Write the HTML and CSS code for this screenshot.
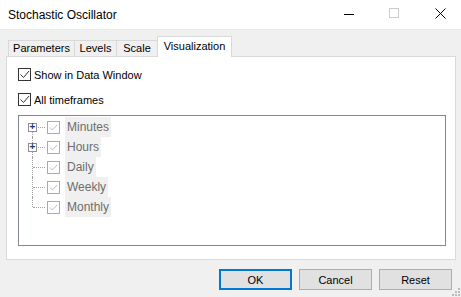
FILE: index.html
```html
<!DOCTYPE html>
<html lang="en">
<head>
  <meta charset="UTF-8" />
  <title>Stochastic Oscillator</title>
  <link rel="stylesheet" href="styles.css">
</head>
<body>
  <div class="window">
    <div class="titlebar">
      <span class="title">Stochastic Oscillator</span>
      <div class="controls">
        <svg class="ctl" width="46" height="29" viewBox="0 0 46 29"><path d="M20 14.5h10" stroke="#000" stroke-width="1"/></svg>
        <svg class="ctl" width="46" height="29" viewBox="0 0 46 29"><rect x="19.5" y="8.5" width="9" height="9" fill="none" stroke="#ccc"/></svg>
        <svg class="ctl" width="46" height="29" viewBox="0 0 46 29"><path d="M19.5 8.5l10 10M29.5 8.5l-10 10" stroke="#000" stroke-width="1"/></svg>
      </div>
    </div>

    <div class="tabs">
      <div class="tab t-params">Parameters</div>
      <div class="tab t-levels">Levels</div>
      <div class="tab t-scale">Scale</div>
      <div class="tab active">Visualization</div>
    </div>

    <div class="panel">
      <label class="check-row">
        <span class="box"><svg width="11" height="11" viewBox="0 0 11 11"><path d="M1.5 5.5l3 3 5.5-6.5" fill="none" stroke="#333" stroke-width="1"/></svg></span>
        Show in Data Window
      </label>
      <label class="check-row second">
        <span class="box"><svg width="11" height="11" viewBox="0 0 11 11"><path d="M1.5 5.5l3 3 5.5-6.5" fill="none" stroke="#333" stroke-width="1"/></svg></span>
        All timeframes
      </label>

      <div class="tree">
        <div class="node first">
          <span class="branch"><span class="plus">+</span></span>
          <span class="tbox"><svg width="11" height="11" viewBox="0 0 11 11"><path d="M2 5.5l2.5 2.5 4.5-5" fill="none" stroke="#9cc2ea" stroke-width="1"/></svg></span>
          <span class="name">Minutes</span>
        </div>
        <div class="node">
          <span class="branch"><span class="plus">+</span></span>
          <span class="tbox"><svg width="11" height="11" viewBox="0 0 11 11"><path d="M2 5.5l2.5 2.5 4.5-5" fill="none" stroke="#9cc2ea" stroke-width="1"/></svg></span>
          <span class="name">Hours</span>
        </div>
        <div class="node">
          <span class="branch"></span>
          <span class="tbox"><svg width="11" height="11" viewBox="0 0 11 11"><path d="M2 5.5l2.5 2.5 4.5-5" fill="none" stroke="#9cc2ea" stroke-width="1"/></svg></span>
          <span class="name">Daily</span>
        </div>
        <div class="node">
          <span class="branch"></span>
          <span class="tbox"><svg width="11" height="11" viewBox="0 0 11 11"><path d="M2 5.5l2.5 2.5 4.5-5" fill="none" stroke="#9cc2ea" stroke-width="1"/></svg></span>
          <span class="name">Weekly</span>
        </div>
        <div class="node last">
          <span class="branch"></span>
          <span class="tbox"><svg width="11" height="11" viewBox="0 0 11 11"><path d="M2 5.5l2.5 2.5 4.5-5" fill="none" stroke="#9cc2ea" stroke-width="1"/></svg></span>
          <span class="name">Monthly</span>
        </div>
      </div>
    </div>

    <div class="buttons">
      <button class="default">OK</button>
      <button>Cancel</button>
      <button>Reset</button>
    </div>

    <svg class="grip" width="10" height="10" viewBox="0 0 10 10">
      <rect x="7" y="1" width="2" height="2" fill="#bcbcbc"/>
      <rect x="4" y="4" width="2" height="2" fill="#bcbcbc"/>
      <rect x="7" y="4" width="2" height="2" fill="#bcbcbc"/>
      <rect x="1" y="7" width="2" height="2" fill="#bcbcbc"/>
      <rect x="4" y="7" width="2" height="2" fill="#bcbcbc"/>
      <rect x="7" y="7" width="2" height="2" fill="#bcbcbc"/>
    </svg>
  </div>
</body>
</html>
```

FILE: styles.css
```css
* { margin: 0; padding: 0; box-sizing: border-box; }
body {
  background: #f0f0f0;
  font-family: 'Liberation Sans', Arial, sans-serif;
  font-size: 11px;
  color: #000;
  overflow: hidden;
}
.window {
  width: 461px;
  height: 297px;
  position: relative;
  display: flex;
  flex-direction: column;
}
.titlebar {
  height: 30px;
  background: #fff;
  border-bottom: 1px solid #ececec;
  display: flex;
  align-items: flex-start;
  justify-content: space-between;
}
.title {
  font-size: 12px;
  margin: 8px 0 0 8px;
}
.controls { display: flex; margin-right: -1px; }
.ctl { display: block; }

.tabs {
  display: flex;
  align-items: flex-end;
  margin: 6px 0 0 8px;
  height: 20px;
  position: relative;
  z-index: 1;
}
.tab {
  height: 16px;
  line-height: 15px;
  text-align: center;
  border: 1px solid #d9d9d9;
  border-bottom: none;
  border-right: none;
  background: #f0f0f0;
}
.t-params { width: 66px; }
.t-levels { width: 42px; }
.t-scale { width: 41px; }
.tab.active {
  width: 75px;
  height: 21px;
  margin-bottom: -1px;
  background: #fff;
  border-right: 1px solid #d9d9d9;
  line-height: 18px;
}
.panel {
  margin: 0 5px 0 6px;
  height: 204px;
  background: #fff;
  border: 1px solid #d9d9d9;
  padding: 11px 9px 0 11px;
}
.check-row {
  display: flex;
  align-items: center;
  gap: 3px;
  height: 13px;
}
.check-row.second { margin-top: 12px; }
.box {
  width: 13px;
  height: 13px;
  border: 1px solid #333;
  background: #fff;
  display: flex;
  align-items: center;
  justify-content: center;
}
.box svg { display: block; }

.tree {
  margin-top: 9px;
  height: 131px;
  border: 1px solid #828790;
  padding: 1px 0 0 9px;
}
.node {
  height: 20px;
  display: flex;
  align-items: center;
}
.branch {
  width: 19px;
  height: 20px;
  position: relative;
  flex: none;
}
.branch::before {
  content: '';
  position: absolute;
  left: 4px;
  top: 0;
  height: 20px;
  border-left: 1px dotted #a0a0a0;
}
.node.first .branch::before { top: 15px; height: 5px; }
.node.last .branch::before { height: 10px; }
.branch::after {
  content: '';
  position: absolute;
  left: 5px;
  top: 10px;
  width: 12px;
  border-top: 1px dotted #a0a0a0;
}
.plus {
  position: absolute;
  left: 0;
  top: 6px;
  width: 9px;
  height: 9px;
  border: 1px solid #919191;
  background: #fff;
  z-index: 1;
  font-size: 10px;
  line-height: 6px;
  text-align: center;
  color: #1a3a6b;
  font-weight: bold;
}
.tbox {
  width: 13px;
  height: 13px;
  border: 1px solid #84b2e2;
  background: #fff;
  display: flex;
  align-items: center;
  justify-content: center;
  flex: none;
}
.tbox svg { display: block; }
.name {
  margin-left: 5px;
  height: 20px;
  line-height: 20px;
  padding: 0 2px;
  background: #f0f0f0;
  color: #6d6d6d;
  font-size: 12px;
}

.buttons {
  display: flex;
  justify-content: flex-end;
  gap: 7px;
  margin: 9px 9px 0 0;
}
.buttons button {
  width: 73px;
  height: 21px;
  background: #e1e1e1;
  border: 1px solid #adadad;
  font-family: inherit;
  font-size: 11px;
  color: #000;
}
.buttons button.default {
  border: 2px solid #0078d7;
}
.grip {
  position: absolute;
  right: 0;
  bottom: 0;
}
```
